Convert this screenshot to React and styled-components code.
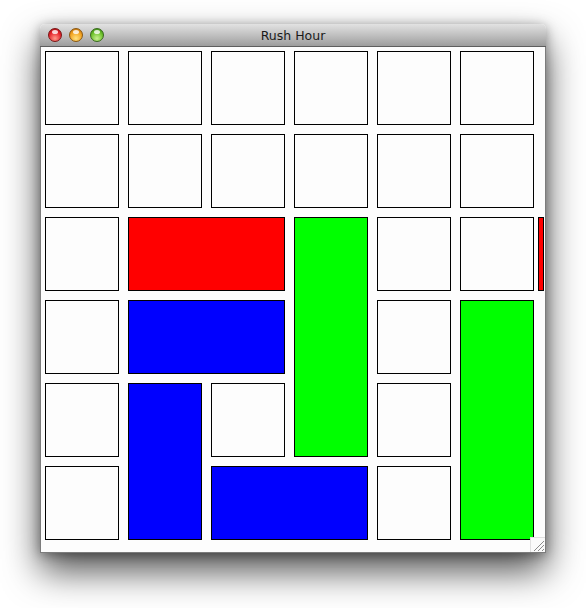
import React from "react";
import styled, { createGlobalStyle } from "styled-components";

const GlobalStyle = createGlobalStyle`
  html, body {
    margin: 0;
    padding: 0;
    background: #ffffff;
  }
`;

const Page = styled.div`
  box-sizing: border-box;
  width: 586px;
  height: 608px;
  padding: 24px 40px 0 40px;
  overflow: hidden;
`;

const Window = styled.div`
  width: 506px;
  border-radius: 5px 5px 0 0;
  box-shadow: 0 18px 36px rgba(0, 0, 0, 0.68), 0 2px 12px rgba(0, 0, 0, 0.35);
  background: #fdfdfd;
`;

const TitleBar = styled.div`
  position: relative;
  height: 22px;
  display: flex;
  align-items: center;
  justify-content: center;
  border-radius: 5px 5px 0 0;
  background: linear-gradient(#e2e2e2, #bdbdbd 55%, #9d9d9d);
  border-bottom: 1px solid #5e5e5e;
  font-family: "DejaVu Sans", "Liberation Sans", sans-serif;
  font-size: 12.5px;
  color: #1a1a1a;
`;

const Lights = styled.div`
  position: absolute;
  left: 8px;
  top: 4px;
  display: flex;
  gap: 7px;
`;

const Light = styled.span`
  width: 14px;
  height: 14px;
  border-radius: 50%;
  box-sizing: border-box;
  border: 1px solid ${(p) => p.$edge};
  background: radial-gradient(circle at 50% 78%, ${(p) => p.$glow} 0%, ${(p) => p.$base} 58%, ${(p) => p.$dark} 100%);
  position: relative;
  &::after {
    content: "";
    position: absolute;
    left: 3px;
    top: 1px;
    width: 6px;
    height: 4px;
    border-radius: 50%;
    background: rgba(255, 255, 255, 0.8);
  }
`;

const Content = styled.div`
  position: relative;
  border: 1px solid #7c7c7c;
  border-top: none;
  padding: 4px 4px 12px 4px;
  overflow: hidden;
`;

const Board = styled.div`
  display: grid;
  grid-template-columns: repeat(6, 74px) 0px;
  grid-template-rows: repeat(6, 74px);
  gap: 9px;
`;

const Cell = styled.div`
  box-sizing: border-box;
  border: 1px solid #000;
  background: #fdfdfd;
  grid-column: ${(p) => p.$col + 1};
  grid-row: ${(p) => p.$row + 1};
`;

const Car = styled.div`
  box-sizing: border-box;
  border: 1px solid #000;
  background: ${(p) => p.$color};
  grid-column: ${(p) => p.$col + 1} / span ${(p) => p.$w};
  grid-row: ${(p) => p.$row + 1} / span ${(p) => p.$h};
`;

const Sliver = styled.div`
  box-sizing: border-box;
  border: 1px solid #000;
  background: #ff0000;
  grid-column: 7;
  grid-row: 3;
  width: 6px;
  margin-left: -5px;
`;

const Grip = styled.div`
  position: absolute;
  right: 0;
  bottom: 0;
  width: 14px;
  height: 14px;
  border-left: 1px solid #e0e0e0;
  border-top: 1px solid #e0e0e0;
  background: #fafafa;
`;

const cars = [
  { col: 1, row: 2, w: 2, h: 1, color: "#ff0000" },
  { col: 3, row: 2, w: 1, h: 3, color: "#00ff00" },
  { col: 1, row: 3, w: 2, h: 1, color: "#0000ff" },
  { col: 1, row: 4, w: 1, h: 2, color: "#0000ff" },
  { col: 2, row: 5, w: 2, h: 1, color: "#0000ff" },
  { col: 5, row: 3, w: 1, h: 3, color: "#00ff00" },
];

const covered = (c, r) =>
  cars.some((k) => c >= k.col && c < k.col + k.w && r >= k.row && r < k.row + k.h);

export default function App() {
  const cells = [];
  for (let r = 0; r < 6; r++) {
    for (let c = 0; c < 6; c++) {
      if (!covered(c, r)) cells.push(<Cell key={`${r}-${c}`} $col={c} $row={r} />);
    }
  }
  return (
    <>
      <GlobalStyle />
      <Page>
        <Window>
          <TitleBar>
            <Lights>
              <Light $base="#e5222a" $glow="#ff9a8a" $dark="#9c0a0e" $edge="#7a1515" />
              <Light $base="#f2a11e" $glow="#ffe27e" $dark="#b06008" $edge="#8a5810" />
              <Light $base="#6cc02a" $glow="#c8f090" $dark="#2f7a10" $edge="#386a1c" />
            </Lights>
            Rush Hour
          </TitleBar>
          <Content>
            <Board>
              {cells}
              {cars.map((k, i) => (
                <Car key={i} $col={k.col} $row={k.row} $w={k.w} $h={k.h} $color={k.color} />
              ))}
              <Sliver />
            </Board>
            <Grip>
              <svg width="14" height="14" viewBox="0 0 14 14">
                <path d="M3 13 L13 3 M7 13 L13 7 M11 13 L13 11" stroke="#8a8a8a" strokeWidth="1" />
              </svg>
            </Grip>
          </Content>
        </Window>
      </Page>
    </>
  );
}
